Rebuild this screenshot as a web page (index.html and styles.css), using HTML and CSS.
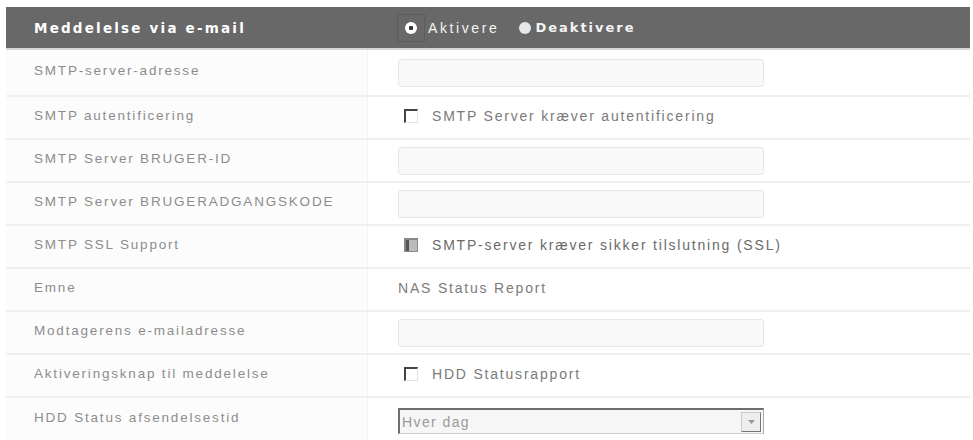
FILE: index.html
```html
<!DOCTYPE html>
<html>
<head>
<meta charset="utf-8">
<link rel="stylesheet" href="styles.css">
</head>
<body>
<div class="panel">
  <div class="row head">
    <div class="cell label">Meddelelse via e-mail</div>
    <div class="cell value">
      <span class="radio-focus"><span class="radio on"></span></span>
      <span class="opt">Aktivere</span>
      <span class="radio off"></span>
      <span class="opt bold">Deaktivere</span>
    </div>
  </div>
  <div class="row first">
    <div class="cell label">SMTP-server-adresse</div>
    <div class="cell value"><div class="input"></div></div>
  </div>
  <div class="row">
    <div class="cell label">SMTP autentificering</div>
    <div class="cell value"><span class="check"></span><span class="text">SMTP Server kræver autentificering</span></div>
  </div>
  <div class="row">
    <div class="cell label">SMTP Server BRUGER-ID</div>
    <div class="cell value"><div class="input"></div></div>
  </div>
  <div class="row">
    <div class="cell label">SMTP Server BRUGERADGANGSKODE</div>
    <div class="cell value"><div class="input"></div></div>
  </div>
  <div class="row">
    <div class="cell label">SMTP SSL Support</div>
    <div class="cell value"><span class="check disabled"></span><span class="text dark">SMTP-server kræver sikker tilslutning (SSL)</span></div>
  </div>
  <div class="row">
    <div class="cell label">Emne</div>
    <div class="cell value"><span class="text plain">NAS Status Report</span></div>
  </div>
  <div class="row">
    <div class="cell label">Modtagerens e-mailadresse</div>
    <div class="cell value"><div class="input"></div></div>
  </div>
  <div class="row">
    <div class="cell label">Aktiveringsknap til meddelelse</div>
    <div class="cell value"><span class="check"></span><span class="text">HDD Statusrapport</span></div>
  </div>
  <div class="row last">
    <div class="cell label">HDD Status afsendelsestid</div>
    <div class="cell value">
      <div class="select"><span class="sel-text">Hver dag</span><span class="sel-btn"><svg width="9" height="6" viewBox="0 0 9 6"><path d="M1 1 L8 1 L4.5 5 Z" fill="#999"/></svg></span></div>
    </div>
  </div>
</div>
</body>
</html>
```
FILE: styles.css
```css
* { box-sizing: border-box; }
html, body { margin: 0; padding: 0; background: #fff; }
body { font-family: "Liberation Sans", Arial, sans-serif; }
.panel {
  margin: 7px 3px 0 6px;
  display: flex;
  flex-direction: column;
}
.row {
  display: grid;
  grid-template-columns: 362px 1fr;
  height: 43px;
  border-bottom: 2px solid #efefef;
}
.row.first { height: 47px; }
.row.last { border-bottom: none; }
.cell {
  display: flex;
  align-items: center;
}
.label {
  padding-left: 28px;
  background: #fcfcfc;
  border-right: 1px solid #f3f3f3;
  color: #8c8c8c;
  font-size: 13.5px;
  letter-spacing: 1.8px;
  padding-bottom: 4px;
}
.value {
  padding-left: 30px;
  color: #7a7a7a;
  font-size: 14px;
  letter-spacing: 1.8px;
  padding-bottom: 3px;
}
.head {
  background: #686868;
  border-bottom: 2px solid #d6d6d6;
  height: 43px;
}
.head .label {
  background: transparent;
  border-right: none;
  color: #fff;
  font-family: "DejaVu Sans", Verdana, sans-serif;
  font-weight: bold;
  font-size: 13.5px;
  letter-spacing: 2.2px;
  padding-bottom: 0;
}
.head .value {
  color: #f4f4f4;
  padding-left: 29px;
  padding-bottom: 0;
}
.radio-focus {
  width: 28px;
  height: 28px;
  border: 1px solid #5c5c5c;
  display: flex;
  align-items: center;
  justify-content: center;
  margin-right: 3px;
}
.radio {
  width: 12px;
  height: 12px;
  border-radius: 50%;
  display: inline-block;
}
.radio.on {
  background: radial-gradient(circle, #333 0 2px, #fff 2.5px);
}
.radio.off {
  background: #e8e8e8;
  margin-left: 20px;
  margin-right: 4px;
}
.opt { font-size: 14px; letter-spacing: 2.6px; }
.opt.bold { font-family: "DejaVu Sans", Verdana, sans-serif; font-weight: bold; font-size: 13px; letter-spacing: 2px; }
.input {
  width: 366px;
  height: 28px;
  background: #f9f9f9;
  border: 1px solid #e6e6e6;
  border-radius: 3px;
  margin-top: 3px;
}
.check {
  width: 14px;
  height: 14px;
  margin-left: 6px;
  margin-right: 14px;
  border-top: 2px solid #444;
  border-left: 2px solid #444;
  border-right: 1px solid #e2e2e2;
  border-bottom: 1px solid #e2e2e2;
  background: #fff;
}
.check.disabled {
  background: linear-gradient(90deg, #555 0 3px, #bbb 3px);
  border-color: #888;
}
.text.dark { color: #6a6a6a; }
.text.plain { color: #7c7c7c; }
.select {
  width: 366px;
  height: 26px;
  border-top: 2px solid #6e6e6e;
  border-left: 2px solid #6e6e6e;
  border-right: 1px solid #aaa;
  border-bottom: 1px solid #ccc;
  background: #f6f6f6;
  display: flex;
  align-items: center;
  justify-content: space-between;
  margin-top: 6px;
}
.sel-text {
  padding-left: 2px;
  color: #9a9a9a;
  font-size: 14px;
  letter-spacing: 1.4px;
}
.sel-btn {
  width: 20px;
  height: 20px;
  margin-right: 2px;
  background: #eee;
  border: 1px solid #ccc;
  border-right-color: #777;
  border-bottom-color: #777;
  display: flex;
  align-items: center;
  justify-content: center;
}
```
